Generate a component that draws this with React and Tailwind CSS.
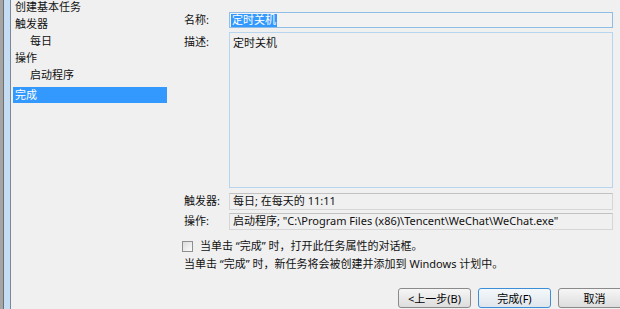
import React from "react";

const navItems = [
  { label: "创建基本任务", indent: false },
  { label: "触发器", indent: false },
  { label: "每日", indent: true },
  { label: "操作", indent: false },
  { label: "启动程序", indent: true },
];

const WinButton = ({ children, primary = false }) => (
  <button
    className={
      "w-[73px] h-[20px] shrink-0 rounded-[3px] border text-[11px] leading-none text-black bg-gradient-to-b " +
      (primary
        ? "border-[#3c8fd6] from-[#f4f8fb] to-[#dfe6ec]"
        : "border-[#8a8a8a] from-[#f6f6f6] to-[#dddddd]")
    }
  >
    {children}
  </button>
);

export default function App() {
  return (
    <div className="w-[620px] h-[309px] overflow-hidden bg-[#f0f0f0] flex font-['Noto_Sans','Noto_Sans_CJK_SC',sans-serif] text-[11px] text-[#111]">
      {/* window frame edge */}
      <div className="flex shrink-0">
        <div className="w-[3px] bg-[#a5a5a5]" />
        <div className="w-[1px] bg-[#6e6e6e]" />
        <div className="w-[6px] bg-[#c4dcf4]" />
        <div className="w-[1px] bg-[#7a8794]" />
      </div>

      {/* wizard steps */}
      <div className="w-[157px] shrink-0 flex flex-col -mt-[1px]">
        {navItems.map((item) => (
          <div
            key={item.label}
            className={"h-[17px] flex items-center " + (item.indent ? "pl-[19px]" : "pl-[4px]")}
          >
            {item.label}
          </div>
        ))}
        <div className="mt-[3px] ml-[2px] w-[154px] h-[16px] bg-[#3399ff] text-white flex items-center pl-[2px]">
          完成
        </div>
      </div>

      {/* summary */}
      <div className="flex-1 flex flex-col pt-[12px] pl-[16px]">
        <div className="flex h-[16px]">
          <div className="w-[45px] flex items-center">名称:</div>
          <div className="w-[384px] border border-[#8fbde6] bg-[#f2f2f2] flex items-center pl-[1px]">
            <span className="bg-[#3399ff] text-white px-[1px] h-[13px] flex items-center">定时关机</span>
          </div>
        </div>

        <div className="flex mt-[4px] h-[156px]">
          <div className="w-[45px] pt-[2px]">描述:</div>
          <div className="w-[384px] border border-[#b7d5ef] bg-[#f0f0f0] pl-[3px] pt-[2px]">定时关机</div>
        </div>

        <div className="flex mt-[5px] h-[17px]">
          <div className="w-[45px] flex items-center">触发器:</div>
          <div className="w-[384px] border border-[#d6d6d6] border-t-[#c2c2c2] bg-[#f0f0f0] flex items-center pl-[3px]">
            每日; 在每天的 11:11
          </div>
        </div>

        <div className="flex mt-[3px] h-[17px]">
          <div className="w-[45px] flex items-center">操作:</div>
          <div className="w-[384px] border border-[#d6d6d6] border-t-[#c2c2c2] bg-[#f0f0f0] flex items-center pl-[3px]">
            启动程序; "C:\Program Files (x86)\Tencent\WeChat\WeChat.exe"
          </div>
        </div>

        <div className="flex items-center mt-[11px] h-[11px] -ml-[2px]">
          <div className="w-[11px] h-[11px] border border-[#8e8f8f] bg-gradient-to-br from-[#dcdcdc] to-[#fbfbfb]" />
          <span className="ml-[7px]">当单击 “完成” 时，打开此任务属性的对话框。</span>
        </div>

        <div className="mt-[5px] h-[14px] flex items-center">
          当单击 “完成” 时，新任务将会被创建并添加到 Windows 计划中。
        </div>

        <div className="mt-[17px] flex gap-[7px] pl-[214px]">
          <WinButton>&lt;上一步(B)</WinButton>
          <WinButton primary>完成(F)</WinButton>
          <WinButton>取消</WinButton>
        </div>
      </div>
    </div>
  );
}
